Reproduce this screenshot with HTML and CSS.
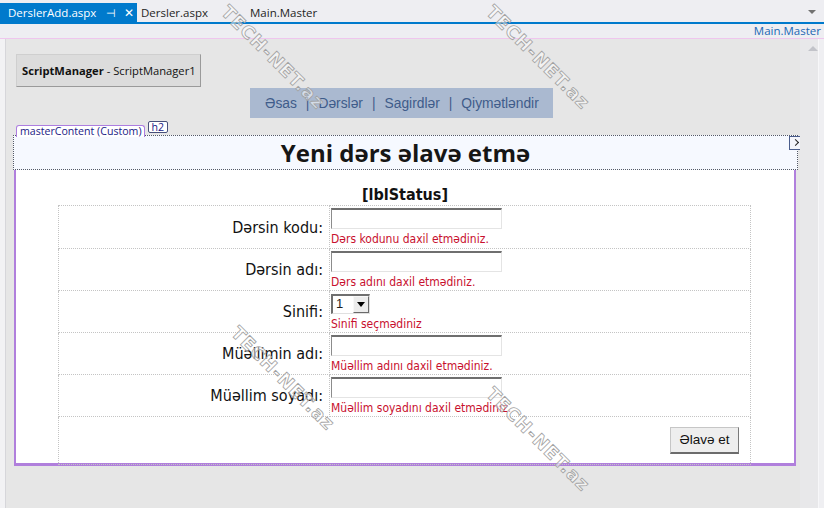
FILE: index.html
```html
<!DOCTYPE html>
<html lang="az">

<head>
  <meta charset="UTF-8">
  <meta name="viewport" content="width=device-width, initial-scale=1.0">
  <title>DerslerAdd.aspx</title>
  <link rel="stylesheet" href="styles.css">
</head>

<body>

  <div class="tabs">
    <div class="tab active">
      <span class="tab-name">DerslerAdd.aspx</span>
      <span class="tab-pin">&#8867;</span>
      <span class="tab-close">&#10005;</span>
    </div>
    <div class="tab second">Dersler.aspx</div>
    <div class="tab">Main.Master</div>
    <span class="tab-menu"></span>
  </div>
  <div class="subbar">Main.Master</div>

  <div class="workspace">
    <div class="gutter"></div>
    <div class="design">
      <div class="sm"><b>ScriptManager</b> - ScriptManager1</div>

      <div class="nav">
        <span>Əsas</span><i>|</i><span>Dərslər</span><i>|</i><span>Sagirdlər</span><i>|</i><span>Qiymətləndir</span>
      </div>

      <div class="tags">
        <span class="tag-master">masterContent (Custom)</span>
        <span class="tag-h2">h2</span>
      </div>

      <div class="content">
        <div class="heading">
          Yeni dərs əlavə etmə
          <span class="smart-tag"></span>
        </div>

        <div class="status">[lblStatus]</div>

        <table class="form">
          <tr>
            <td class="label">Dərsin kodu:</td>
            <td class="field">
              <div class="textbox"></div>
              <div class="error">Dərs kodunu daxil etmədiniz.</div>
            </td>
          </tr>
          <tr>
            <td class="label">Dərsin adı:</td>
            <td class="field">
              <div class="textbox"></div>
              <div class="error">Dərs adını daxil etmədiniz.</div>
            </td>
          </tr>
          <tr>
            <td class="label">Sinifi:</td>
            <td class="field">
              <div class="dropdown"><span class="dd-value">1</span><span class="dd-btn"></span></div>
              <div class="error">Sinifi seçmədiniz</div>
            </td>
          </tr>
          <tr>
            <td class="label">Müəllimin adı:</td>
            <td class="field">
              <div class="textbox"></div>
              <div class="error">Müəllim adını daxil etmədiniz.</div>
            </td>
          </tr>
          <tr>
            <td class="label">Müəllim soyadı:</td>
            <td class="field">
              <div class="textbox"></div>
              <div class="error">Müəllim soyadını daxil etmədiniz.</div>
            </td>
          </tr>
          <tr class="last">
            <td class="actions" colspan="2"><span class="btn">Əlavə et</span></td>
          </tr>
        </table>
      </div>
    </div>
    <div class="scroll">
      <span class="scroll-up"></span>
    </div>
    <div class="edge"></div>
  </div>

  <!-- watermark -->
  <div class="wm wm1">TECH-NET.az</div>
  <div class="wm wm2">TECH-NET.az</div>
  <div class="wm wm3">TECH-NET.az</div>
  <div class="wm wm4">TECH-NET.az</div>

</body>

</html>
```

FILE: styles.css
```css
* {
  margin: 0;
  padding: 0;
  box-sizing: border-box;
}

html,
body {
  width: 824px;
  height: 508px;
  overflow: hidden;
}

body {
  position: relative;
  background: #eeeef2;
  font-family: "Open Sans", "Noto Sans", sans-serif;
  color: #1e1e1e;
}

/* document tabs */
.tabs {
  height: 24px;
  padding-top: 3px;
  display: flex;
  border-bottom: 2px solid #007acc;
  position: relative;
  font-size: 11.5px;
}

.tab {
  line-height: 19px;
  padding-left: 4px;
  white-space: nowrap;
}

.tab.active {
  width: 137px;
  padding-left: 8px;
  background: #007acc;
  color: #fff;
  display: flex;
}

.tab-pin {
  margin-left: 10px;
  font-size: 11px;
}

.tab-close {
  margin-left: 8px;
  font-size: 12px;
}

.tab.second {
  width: 109px;
}

.tab-menu {
  position: absolute;
  right: 8px;
  top: 10px;
  border-left: 4px solid transparent;
  border-right: 4px solid transparent;
  border-top: 4px solid #717171;
}

.subbar {
  height: 15px;
  line-height: 14px;
  text-align: right;
  padding-right: 3px;
  font-size: 11.5px;
  color: #1b68b5;
  border-bottom: 1px solid #efc6ee;
}

/* designer surface */
.workspace {
  display: flex;
  height: 469px;
}

.gutter {
  width: 6px;
  background: #f2f2f4;
  border-right: 1px solid #d6d6da;
}

.design {
  width: 794px;
  background: #e6e6e6;
}

.scroll {
  width: 18px;
  background: #e8e8ea;
  position: relative;
}

.scroll-up {
  position: absolute;
  left: 8px;
  top: 7px;
  border-left: 5px solid transparent;
  border-right: 5px solid transparent;
  border-bottom: 5px solid #c2c3c9;
}

.edge {
  flex: 1;
  background: #efeff2;
  border-left: 1px solid #f7f7f9;
}

.sm {
  width: 185px;
  height: 33px;
  margin: 15px 0 0 10px;
  padding-left: 5px;
  line-height: 31px;
  white-space: nowrap;
  font-size: 11.2px;
  color: #111;
  background: #dcdcdc;
  border: 1px solid #cfcfcf;
  border-right-color: #9a9a9a;
  border-bottom-color: #9a9a9a;
}

.nav {
  width: 303px;
  height: 30px;
  margin: 1px 0 0 244px;
  padding-left: 15px;
  display: flex;
  align-items: center;
  white-space: nowrap;
  background: #aab9d0;
  color: #3f5c8a;
  font-family: "Liberation Sans", Arial, sans-serif;
  font-size: 13.8px;
}

.nav i {
  font-style: normal;
  margin: 0 9px;
}

.tags {
  height: 16px;
  margin-top: 3px;
  padding-left: 10px;
  display: flex;
  position: relative;
  z-index: 2;
  font-size: 10.6px;
  color: #1a1a86;
}

.tag-master {
  align-self: flex-end;
  height: 12px;
  line-height: 11px;
  padding: 0 2px 0 3px;
  background: #fff;
  border: 1px solid #ad7ee0;
  border-bottom: none;
  border-radius: 3px 3px 0 0;
}

.tag-h2 {
  height: 12px;
  line-height: 10px;
  margin-left: 3px;
  padding: 0 3px;
  background: #fff;
  border: 1px solid #47507a;
  border-radius: 2px;
}

.content {
  width: 782px;
  height: 329px;
  margin-left: 8px;
  background: #fff;
  border: 2px solid #b07fdc;
  border-bottom-width: 3px;
}

.heading {
  position: relative;
  height: 35px;
  margin: -4px -4px 0 -3px;
  line-height: 33px;
  text-align: center;
  font-weight: 700;
  font-size: 24px;
  color: #161616;
  background: #f6f9ff;
  border: 1px dotted #555a66;
}

.smart-tag {
  position: absolute;
  left: 775px;
  top: 0;
  width: 14px;
  height: 14px;
  background: #f4f5fb;
  border: 1px solid #4a5d8c;
}

.smart-tag::after {
  content: "";
  position: absolute;
  left: 3px;
  top: 3px;
  width: 4px;
  height: 4px;
  border-right: 1px solid #222;
  border-top: 1px solid #222;
  transform: rotate(45deg);
}

.status {
  margin-top: 15px;
  height: 20px;
  line-height: 20px;
  text-align: center;
  font-family: "DejaVu Sans Condensed", "DejaVu Sans", sans-serif;
  font-weight: 700;
  font-size: 16px;
  color: #111;
}

/* form table */
.form {
  width: 693px;
  margin-left: 42px;
  border-collapse: collapse;
  font-family: "DejaVu Sans Condensed", "DejaVu Sans", sans-serif;
}

.form td {
  height: 42px;
  border: 1px dotted #c4c4c4;
}

.form tr:first-child td {
  height: 43px;
}

.form tr.last td {
  height: 48px;
}

.form .label {
  width: 271px;
  padding-right: 6px;
  text-align: right;
  font-size: 16px;
  color: #111;
}

.field {
  vertical-align: top;
  padding: 2px 0 0 1px;
}

.textbox {
  width: 171px;
  height: 21px;
  background: #fff;
  border: 1px solid #e4e4e4;
  border-top: 2px solid #6f6f6f;
  border-left: 1px solid #8c8c8c;
}

.dropdown {
  width: 39px;
  height: 20px;
  margin-top: 1px;
  display: flex;
  border: 1px solid #e0e0e0;
  border-top: 2px solid #6f6f6f;
  border-left: 2px solid #6f6f6f;
  font-family: "Liberation Sans", Arial, sans-serif;
  font-size: 13px;
}

.dd-value {
  flex: 1;
  padding-left: 3px;
  line-height: 16px;
}

.dd-btn {
  width: 16px;
  position: relative;
  background: #ececec;
  border: 1px solid #f8f8f8;
  border-right-color: #6a6a6a;
  border-bottom-color: #6a6a6a;
}

.dd-btn::after {
  content: "";
  position: absolute;
  left: 3px;
  top: 5px;
  border-left: 4px solid transparent;
  border-right: 4px solid transparent;
  border-top: 5px solid #000;
}

.error {
  margin-top: 3px;
  font-size: 12px;
  line-height: 14px;
  color: #c8102e;
}

.actions {
  text-align: right;
  padding-right: 11px;
}

.btn {
  display: inline-block;
  width: 69px;
  height: 27px;
  line-height: 24px;
  text-align: center;
  font-family: "Liberation Sans", Arial, sans-serif;
  font-size: 13.5px;
  color: #111;
  background: #eeeeee;
  border: 1px solid #c6c6c6;
  border-right-color: #7a7a7a;
  border-bottom: 2px solid #6c6c6c;
}

/* watermark over the picture */
.wm {
  position: absolute;
  transform-origin: 0 0;
  transform: rotate(45deg);
  font-family: "DejaVu Sans", sans-serif;
  font-weight: 700;
  font-size: 18px;
  letter-spacing: 1px;
  color: rgba(255, 255, 255, 0.5);
  -webkit-text-stroke: 0.8px #a2a2a2;
  white-space: nowrap;
  pointer-events: none;
}

.wm1 {
  left: 232px;
  top: 1px;
}

.wm2 {
  left: 497px;
  top: 1px;
}

.wm3 {
  left: 242px;
  top: 322px;
}

.wm4 {
  left: 497px;
  top: 383px;
}
```
